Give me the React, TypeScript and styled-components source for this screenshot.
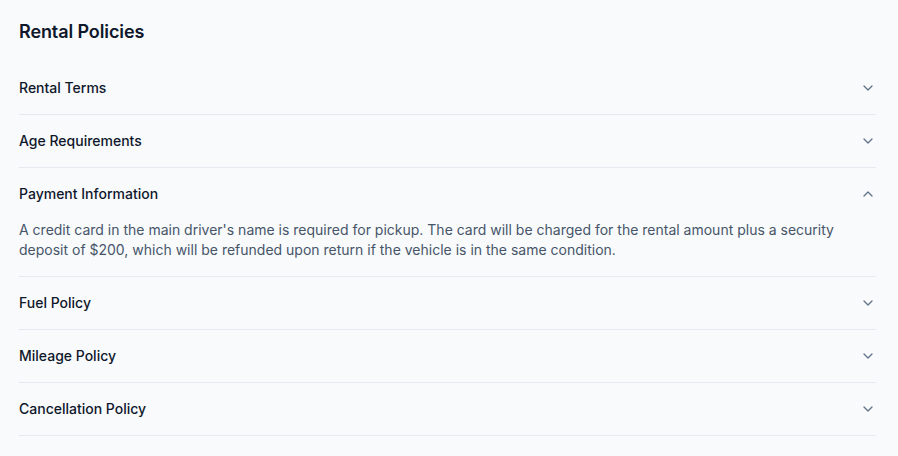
import React, { useState } from 'react'
import styled, { createGlobalStyle } from 'styled-components'
import { ChevronDown, ChevronUp } from 'lucide-react'

const GlobalStyle = createGlobalStyle`
  html, body {
    margin: 0;
    padding: 0;
    background: #f8fafc;
  }
  body {
    font-family: Inter, 'Noto Sans', sans-serif;
    -webkit-font-smoothing: antialiased;
  }
`

const Page = styled.div`
  width: 898px;
  height: 456px;
  box-sizing: border-box;
  padding: 18px 22px 0 19px;
  background: #f8fafc;
`

const Title = styled.h2`
  margin: 0 0 16px;
  font-size: 18px;
  line-height: 28px;
  font-weight: 600;
  color: #0f172a;
  letter-spacing: -0.1px;
`

const List = styled.div`
  display: flex;
  flex-direction: column;
`

const Item = styled.div`
  border-bottom: 1px solid #e6eaf0;
`

const Trigger = styled.button`
  display: flex;
  width: 100%;
  align-items: center;
  justify-content: space-between;
  padding: 16px 0;
  background: none;
  border: none;
  cursor: pointer;
  font-family: inherit;
  font-size: 14px;
  line-height: 20px;
  font-weight: 500;
  color: #0f172a;
  text-align: left;
`

const Chevron = styled.span`
  display: flex;
  align-items: center;
  color: #64748b;
`

const Content = styled.div`
  padding: 0 40px 16px 0;
  font-size: 14px;
  line-height: 20px;
  color: #475569;
`

const items = [
  { title: 'Rental Terms', body: '' },
  { title: 'Age Requirements', body: '' },
  {
    title: 'Payment Information',
    body:
      "A credit card in the main driver's name is required for pickup. The card will be charged for the rental amount plus a security deposit of $200, which will be refunded upon return if the vehicle is in the same condition.",
  },
  { title: 'Fuel Policy', body: '' },
  { title: 'Mileage Policy', body: '' },
  { title: 'Cancellation Policy', body: '' },
]

export default function App() {
  const [open, setOpen] = useState<number | null>(2)

  return (
    <Page>
      <GlobalStyle />
      <Title>Rental Policies</Title>
      <List>
        {items.map((it, i) => (
          <Item key={it.title}>
            <Trigger onClick={() => setOpen(open === i ? null : i)}>
              {it.title}
              <Chevron>
                {open === i ? <ChevronUp size={16} /> : <ChevronDown size={16} />}
              </Chevron>
            </Trigger>
            {open === i && <Content>{it.body}</Content>}
          </Item>
        ))}
      </List>
    </Page>
  )
}
